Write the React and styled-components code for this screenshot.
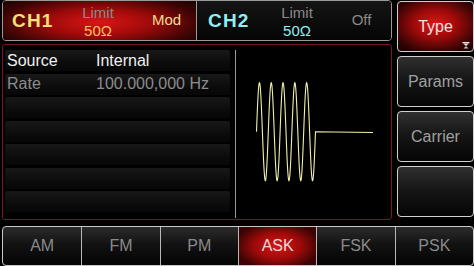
import React from 'react';
import styled, { createGlobalStyle } from 'styled-components';

const GlobalStyle = createGlobalStyle`
    html, body {
        margin: 0;
        padding: 0;
        background: #000;
    }
    body {
        font-family: "Liberation Sans", Arial, sans-serif;
    }
`;

const Screen = styled.div`
    width: 474px;
    height: 266px;
    box-sizing: border-box;
    padding: 0 2px 0 2px;
    display: grid;
    grid-template-columns: 390px 77px;
    grid-template-rows: 220px 40px;
    column-gap: 5px;
    row-gap: 6px;
    background: #000;
    overflow: hidden;
`;

const LeftCol = styled.div`
    display: flex;
    flex-direction: column;
    gap: 3px;
`;

const TopBar = styled.div`
    height: 41px;
    box-sizing: border-box;
    display: grid;
    grid-template-columns: 193px 1fr;
    border: 1px solid #9a9a9a;
    border-radius: 4px;
    overflow: hidden;
`;

const Channel = styled.div`
    display: grid;
    grid-template-columns: ${p => p.$cols};
    align-items: center;
    padding-left: ${p => p.$pad}px;
    background: ${p => p.$active
        ? 'radial-gradient(ellipse 65% 85% at 50% 55%, #d81616 0%, #a00a0a 40%, #3a0404 80%, #1c0202 100%)'
        : 'linear-gradient(#141414, #050505)'};
    border-left: ${p => p.$active ? 'none' : '1px solid #9a9a9a'};
`;

const ChName = styled.div`
    font-size: 19px;
    font-weight: bold;
    color: ${p => p.$color};
    letter-spacing: 1.2px;
`;

const Limit = styled.div`
    display: flex;
    flex-direction: column;
    align-items: center;
    line-height: 15px;
    margin-top: 1px;
`;

const LimitLabel = styled.span`
    font-size: 15px;
    color: #8a8a8a;
`;

const LimitValue = styled.span`
    font-size: 15px;
    color: ${p => p.$color};
    margin-top: 3px;
`;

const Status = styled.div`
    font-size: 15px;
    color: ${p => p.$color};
    text-align: center;
    padding-left: ${p => p.$shift}px;
    margin-top: -3px;
`;

const Panel = styled.div`
    flex: 1;
    box-sizing: border-box;
    border: 1px solid #7a1626;
    border-radius: 3px;
    display: grid;
    grid-template-columns: 233px 1fr;
    background: #000;
`;

const Table = styled.div`
    display: flex;
    flex-direction: column;
    gap: 2.5px;
    padding-left: 2px;
    border-right: 1px solid #9a9a9a;
    margin: 5px 0 1px 0;
`;

const Row = styled.div`
    height: 21px;
    margin-right: 5px;
    display: grid;
    grid-template-columns: 89px 1fr;
    align-items: center;
    padding-left: 2px;
    border-radius: 2px;
    background: linear-gradient(#181818, #0a0a0a 70%, #070707);
    font-size: 16px;
    color: ${p => p.$color};
`;

const WaveArea = styled.div`
    display: flex;
`;

const RightCol = styled.div`
    display: flex;
    flex-direction: column;
    gap: 4px;
    padding-top: 1px;
`;

const SoftKey = styled.div`
    position: relative;
    height: 51px;
    box-sizing: border-box;
    border: 1px solid #d0d0d0;
    border-radius: 4px;
    display: flex;
    align-items: center;
    justify-content: center;
    font-size: 16px;
    color: ${p => p.$active ? '#f4e4e4' : '#a0a0a0'};
    background: ${p => p.$active
        ? 'radial-gradient(ellipse 70% 70% at 50% 45%, #dc1616 0%, #a00a0a 40%, #3a0404 80%, #1a0202 100%)'
        : 'linear-gradient(#303030, #161616 45%, #050505)'};
`;

const Marker = styled.svg`
    position: absolute;
    right: 3px;
    bottom: 2px;
`;

const TabBar = styled.div`
    grid-column: 1 / 3;
    display: grid;
    grid-template-columns: repeat(6, 1fr);
    border: 1px solid #c8c8c8;
    border-radius: 4px;
    overflow: hidden;
    background: linear-gradient(#2c2c2c, #121212 45%, #040404);
`;

const Tab = styled.div`
    display: flex;
    align-items: center;
    justify-content: center;
    font-size: 16px;
    color: ${p => p.$active ? '#f2dada' : '#8a8a8a'};
    border-left: ${p => p.$first ? 'none' : '1px solid #b8b8b8'};
    background: ${p => p.$active
        ? 'radial-gradient(ellipse 65% 75% at 50% 50%, #d81616 0%, #a00a0a 45%, #3a0404 85%)'
        : 'transparent'};
`;

const rows = [
    { label: 'Source', value: 'Internal', color: '#f0f0f0' },
    { label: 'Rate', value: '100.000,000 Hz', color: '#8c8c8c' },
    {}, {}, {}, {}, {},
];

const tabs = ['AM', 'FM', 'PM', 'ASK', 'FSK', 'PSK'];

// sine burst then flat line, in page coordinates
const wavePath = () => {
    const x0 = 256.5, period = 11.8, amp = 49, cy = 131.7;
    let d = `M ${x0} ${cy}`;
    for (let i = 1; i <= 5 * 60; i++) {
        const x = x0 + (i / 60) * period;
        const y = cy - amp * Math.sin((2 * Math.PI * i) / 60);
        d += ` L ${x.toFixed(2)} ${y.toFixed(2)}`;
    }
    d += ` L 373 ${cy + 0.8}`;
    return d;
};

export default function App() {
    return (
        <>
            <GlobalStyle />
            <Screen>
                <LeftCol>
                    <TopBar>
                        <Channel $active $cols="61px 50px 1fr" $pad={9}>
                            <ChName $color="#f2e27a">CH1</ChName>
                            <Limit>
                                <LimitLabel>Limit</LimitLabel>
                                <LimitValue $color="#f6c060">50Ω</LimitValue>
                            </Limit>
                            <Status $color="#eedc90" $shift={14}>Mod</Status>
                        </Channel>
                        <Channel $cols="64px 50px 1fr" $pad={11}>
                            <ChName $color="#90eef2">CH2</ChName>
                            <Limit>
                                <LimitLabel>Limit</LimitLabel>
                                <LimitValue $color="#90eef2">50Ω</LimitValue>
                            </Limit>
                            <Status $color="#8a8a8a" $shift={10}>Off</Status>
                        </Channel>
                    </TopBar>
                    <Panel>
                        <Table>
                            {rows.map((r, i) => (
                                <Row key={i} $color={r.color}>
                                    <span>{r.label}</span>
                                    <span>{r.value}</span>
                                </Row>
                            ))}
                        </Table>
                        <WaveArea>
                            <svg width="154" height="174" viewBox="236 45 154 174">
                                <path d={wavePath()} fill="none" stroke="#f2f0a8" strokeWidth="1.1" />
                            </svg>
                        </WaveArea>
                    </Panel>
                </LeftCol>
                <RightCol>
                    <SoftKey $active>
                        Type
                        <Marker width="8" height="7" viewBox="0 0 8 7">
                            <rect x="0.5" y="0" width="7" height="1.2" fill="#e8e8e8" />
                            <polygon points="1,1.5 7,1.5 4,4" fill="#e8e8e8" />
                            <polygon points="4,4 1.5,6.5 6.5,6.5" fill="#bdbdbd" />
                        </Marker>
                    </SoftKey>
                    <SoftKey>Params</SoftKey>
                    <SoftKey>Carrier</SoftKey>
                    <SoftKey />
                </RightCol>
                <TabBar>
                    {tabs.map((t, i) => (
                        <Tab key={t} $first={i === 0} $active={t === 'ASK'}>{t}</Tab>
                    ))}
                </TabBar>
            </Screen>
        </>
    );
}
